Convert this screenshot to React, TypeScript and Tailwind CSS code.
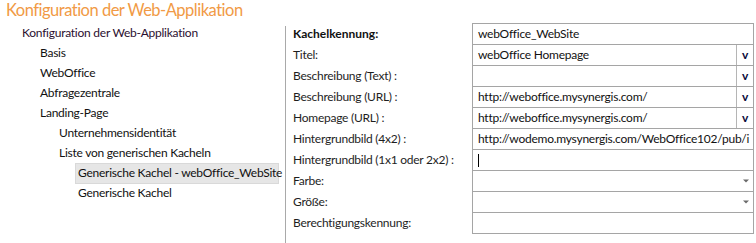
import React from 'react';

interface TreeItem {
	label: string;
	level: number;
	selected?: boolean;
}

interface FieldRow {
	label: string;
	value?: string;
	bold?: boolean;
	kind: 'text' | 'lang' | 'select' | 'cursor';
}

const treeItems: TreeItem[] = [
	{ label: 'Konfiguration der Web-Applikation', level: 0 },
	{ label: 'Basis', level: 1 },
	{ label: 'WebOffice', level: 1 },
	{ label: 'Abfragezentrale', level: 1 },
	{ label: 'Landing-Page', level: 1 },
	{ label: 'Unternehmensidentität', level: 2 },
	{ label: 'Liste von generischen Kacheln', level: 2 },
	{ label: 'Generische Kachel - webOffice_WebSite', level: 3, selected: true },
	{ label: 'Generische Kachel', level: 3 },
];

const fieldRows: FieldRow[] = [
	{ label: 'Kachelkennung:', value: 'webOffice_WebSite', bold: true, kind: 'text' },
	{ label: 'Titel:', value: 'webOffice Homepage', kind: 'lang' },
	{ label: 'Beschreibung (Text) :', kind: 'lang' },
	{ label: 'Beschreibung (URL) :', value: 'http://weboffice.mysynergis.com/', kind: 'lang' },
	{ label: 'Homepage (URL) :', value: 'http://weboffice.mysynergis.com/', kind: 'lang' },
	{ label: 'Hintergrundbild (4x2) :', value: 'http://wodemo.mysynergis.com/WebOffice102/pub/i', kind: 'text' },
	{ label: 'Hintergrundbild (1x1 oder 2x2) :', kind: 'cursor' },
	{ label: 'Farbe:', kind: 'select' },
	{ label: 'Größe:', kind: 'select' },
	{ label: 'Berechtigungskennung:', kind: 'text' },
];

const levelPadding: Record<number, string> = {
	0: 'pl-[22px]',
	1: 'pl-[40px]',
	2: 'pl-[59px]',
	3: 'pl-[78px]',
};

const Tree = () => {
	return (
		<ul className="w-[285px] shrink-0 whitespace-nowrap">
			{treeItems.map((item) =>
				item.selected ? (
					<li key={item.label} className="h-[20px] flex items-center">
						<span className="ml-[75px] w-[204px] h-[21px] flex items-center px-[2px] bg-[#e6e6e6] border border-[#d9d9d9] text-[#111]">
							{item.label}
						</span>
					</li>
				) : (
					<li
						key={item.label}
						className={`h-[20px] flex items-center ${levelPadding[item.level]} ${
							item.level === 0 ? 'text-[#2b0f2f]' : 'text-[#111]'
						}`}
					>
						{item.label}
					</li>
				)
			)}
		</ul>
	);
};

const FieldInput = ({ row, last }: { row: FieldRow; last: boolean }) => {
	return (
		<div
			className={`w-[282px] h-[21px] flex border-x border-t border-[#a5a5a5] ${
				last ? 'border-b h-[22px]' : ''
			}`}
		>
			<div className="flex-1 min-w-0 flex items-center pl-[5px] overflow-hidden whitespace-nowrap text-[#111]">
				{row.kind === 'cursor' && <span className="w-px h-[13px] bg-black" />}
				{row.value}
			</div>
			{row.kind === 'lang' && (
				<div className="w-[17px] border-l border-[#b5b5b5] flex items-center justify-center font-bold text-[#0a0a3a] text-[12px] pb-[1px]">
					v
				</div>
			)}
			{row.kind === 'select' && (
				<div className="w-[14px] flex items-center justify-center">
					<svg width="6" height="4" viewBox="0 0 6 4">
						<path d="M0 0.5 H6 L3 3.5 Z" fill="#6a6a6a" />
					</svg>
				</div>
			)}
		</div>
	);
};

const Form = () => {
	return (
		<div className="flex-1 pl-[7px]">
			{fieldRows.map((row, i) => (
				<div key={row.label} className="flex">
					<div
						className={`w-[179px] h-[21px] flex items-center whitespace-nowrap ${
							row.bold ? 'font-bold text-[#111] tracking-normal' : 'text-[#1e1e1e]'
						}`}
					>
						{row.label}
					</div>
					<FieldInput row={row} last={i === fieldRows.length - 1} />
				</div>
			))}
		</div>
	);
};

export default function App(): JSX.Element {
	return (
		<div className="w-[756px] h-[243px] bg-white overflow-hidden font-['Lato','Liberation_Sans',sans-serif] text-[12px] tracking-[-0.25px]">
			<h1 className="h-[23px] pl-[6px] text-[16.5px] leading-[21px] tracking-[-0.5px] text-[#f19a45]">
				Konfiguration der Web-Applikation
			</h1>
			<div className="flex h-[220px]">
				<Tree />
				<div className="w-px mt-[3px] bg-[#a9a9a9]" />
				<Form />
			</div>
		</div>
	);
}
